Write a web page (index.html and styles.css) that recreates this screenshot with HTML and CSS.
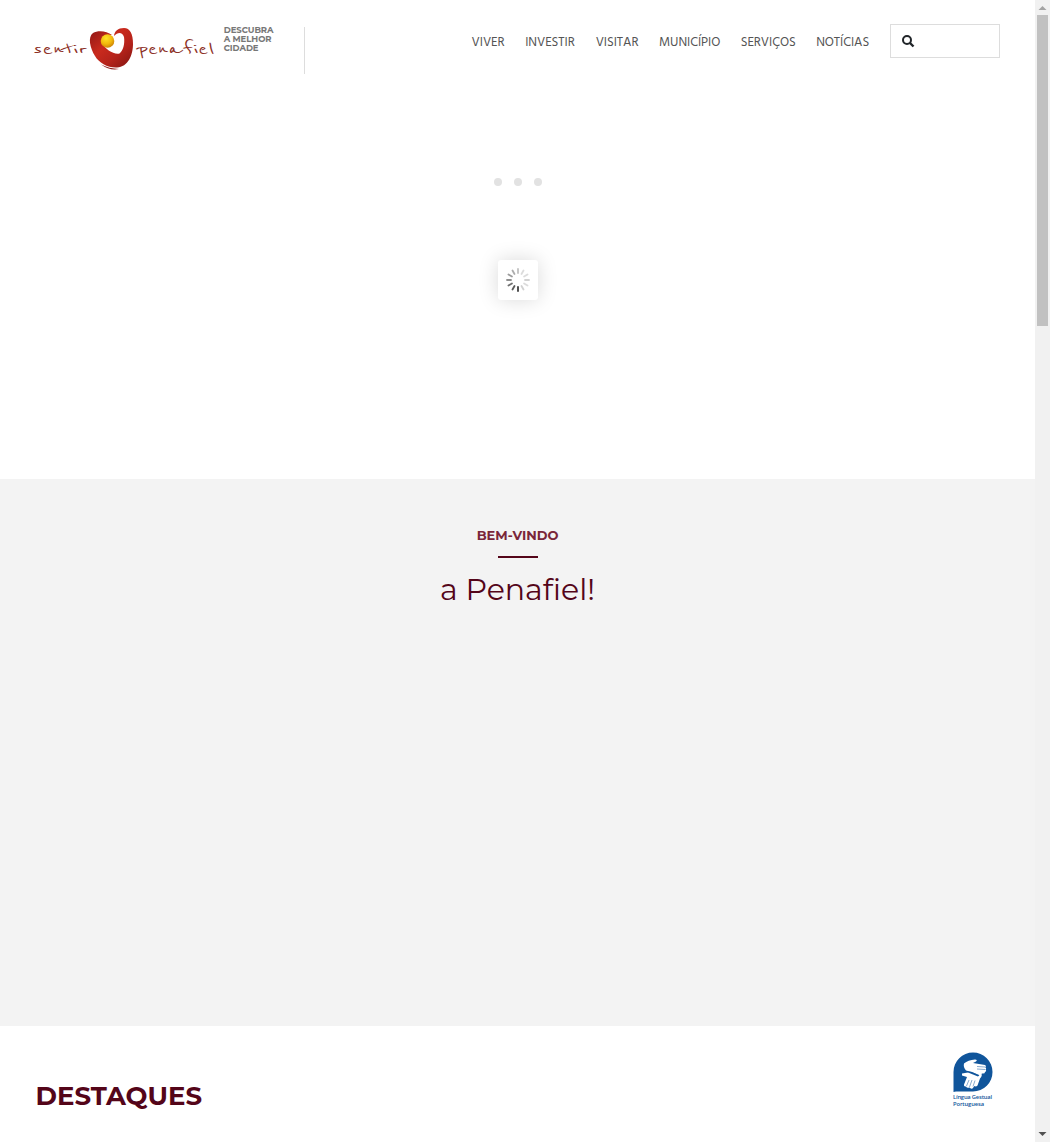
FILE: index.html
```html
<!DOCTYPE html>
<html lang="pt">
<head>
<meta charset="utf-8">
<title>Sentir Penafiel</title>
<link rel="stylesheet" href="styles.css">
</head>
<body>
<div class="window">
  <div class="page">
    <header class="header">
      <a class="logo">
        <svg width="184" height="46" viewBox="32 26 184 46" role="img">
          <defs>
            <linearGradient id="red" x1="0" y1="0" x2="1" y2="1"><stop offset="0" stop-color="#8c1716"/><stop offset=".4" stop-color="#c92a1d"/><stop offset=".65" stop-color="#b5231b"/><stop offset="1" stop-color="#801411"/></linearGradient>
            <radialGradient id="gold" cx=".4" cy=".3" r=".7"><stop offset="0" stop-color="#ffe326"/><stop offset=".6" stop-color="#f2b90c"/><stop offset="1" stop-color="#cf8607"/></radialGradient>
          </defs>
          <text class="script" x="33" y="54" textLength="55" lengthAdjust="spacingAndGlyphs">sentir</text>
          <text class="script" x="137" y="54" textLength="77.500" lengthAdjust="spacingAndGlyphs">penafiel</text>
          <path fill="url(#red)" d="M112 35C107 31 98 30 93 33C87.500 37 90 48 95 56C99 63 108 68 117 67.500C128 67 133 55 133 44C133 34 130 28 124 28C118 28 114.500 31 114 36C118 31.500 122.500 32 124 37C125 44 123 51 119.500 53.500C114 55 105 49 102 43C101 39 105 35 112 35Z"/>
          <circle cx="107.500" cy="41" r="6.800" fill="url(#gold)"/>
          <path fill="#8c1716" d="M101 64.500Q109 68.500 119 69Q110 71 101 64.500Z"/>
        </svg>
      </a>
      <div class="tagline">DESCUBRA<br>A MELHOR<br>CIDADE</div>
      <div class="divider"></div>
      <nav class="nav">
        <a>VIVER</a><a>INVESTIR</a><a>VISITAR</a><a>MUNICÍPIO</a><a>SERVIÇOS</a><a>NOTÍCIAS</a>
      </nav>
      <div class="search">
        <svg width="13" height="13" viewBox="0 0 13 13" fill="none" stroke="#212529"><circle cx="5" cy="5" r="4" stroke-width="2"/><path d="M8 8L11.500 11.500" stroke-width="2.400"/></svg>
      </div>
    </header>
    <section class="slider">
      <div class="dots"><i></i><i></i><i></i></div>
      <div class="loader">
        <svg width="24" height="24" viewBox="-12 -12 24 24" stroke="#333" stroke-width="1.800" stroke-linecap="round">
          <path d="M0 7V11" opacity=".95"/>
          <path d="M0 7V11" opacity=".8" transform="rotate(30)"/>
          <path d="M0 7V11" opacity=".7" transform="rotate(60)"/>
          <path d="M0 7V11" opacity=".55" transform="rotate(90)"/>
          <path d="M0 7V11" opacity=".48" transform="rotate(120)"/>
          <path d="M0 7V11" opacity=".4" transform="rotate(150)"/>
          <path d="M0 7V11" opacity=".3" transform="rotate(180)"/>
          <path d="M0 7V11" opacity=".17" transform="rotate(210)"/>
          <path d="M0 7V11" opacity=".17" transform="rotate(240)"/>
          <path d="M0 7V11" opacity=".22" transform="rotate(270)"/>
          <path d="M0 7V11" opacity=".17" transform="rotate(300)"/>
          <path d="M0 7V11" opacity=".22" transform="rotate(330)"/>
        </svg>
      </div>
    </section>
    <section class="welcome">
      <div class="eyebrow">BEM-VINDO</div>
      <div class="rule"></div>
      <h1 class="title">a Penafiel!</h1>
    </section>
    <section class="highlights">
      <h2 class="heading">DESTAQUES</h2>
      <a class="sign">
        <svg width="42" height="58" viewBox="952 1051 42 58" role="img">
          <path fill="#10559b" d="M953.500 1092V1072A19.500 19.500 0 1 1 973 1091.500H956Z"/>
          <path fill="#fff" d="M964 1063.500Q968 1060 975 1059.500Q978 1060 976 1061.500L973 1063L985 1065Q987 1066.500 985 1067Q987 1068.500 985.500 1069.500Q987 1071 985 1072Q985 1074 982 1073.500L980 1075.500L972 1072L966 1070.500Q963 1067 964 1063.500Z"/>
          <path fill="#fff" d="M962 1073.500L968 1072.500L978 1076.500L981 1073.500Q983 1075 980 1078.500L977.500 1085.500Q976 1087 974.500 1086L972.500 1088.500Q970.500 1089 969.500 1087.500Q967 1088.500 966 1086.500Q963.500 1087 964 1084.500L967 1077L962 1075.500Z"/>
          <path fill="none" stroke="#10559b" stroke-width=".5" d="M977 1066.500L985 1067M977 1069L985 1069.500M966 1071.500L972 1072.500L979 1075.500M969 1080L966.500 1086M972 1080L969.500 1087M975 1080.500L973 1086.500"/>
          <text class="sign-text" x="953" y="1099" textLength="39">Língua Gestual</text>
          <text class="sign-text" x="953" y="1106" textLength="31">Portuguesa</text>
        </svg>
      </a>
    </section>
  </div>
  <div class="scrollbar">
    <svg width="15" height="15"><path d="M3.500 10L7.500 6L11.500 10Z" fill="#a3a3a3"/></svg>
    <div class="thumb"></div>
    <svg class="down" width="15" height="15"><path d="M3.500 5L7.500 9L11.500 5Z" fill="#505050"/></svg>
  </div>
</div>
</body>
</html>
```
FILE: styles.css
```css
* { box-sizing: border-box; }
body { margin: 0; background: #fff; font-family: "Montserrat", "Inter", sans-serif; }
.window { display: flex; height: 1142px; overflow: hidden; }
.page { width: 1035px; display: flex; flex-direction: column; }
.header { height: 100px; display: flex; align-items: flex-start; padding: 24px 35px 0 32px; }
.logo { width: 191.700px; padding-top: 2px; }
.logo svg, .sign svg, .scrollbar svg { display: block; }
.script { font: 400 19px "Reenie Beanie", "Nothing You Could Do", "Caveat", "Indie Flower", "Dancing Script", "Lato", sans-serif; fill: #8c3026; }
.tagline { width: 80.300px; margin-top: 2px; font-size: 8.500px; font-weight: 700; line-height: 9px; color: #777; letter-spacing: -.05px; }
.divider { width: 1px; height: 47px; margin-top: 3px; background: #ddd; }
.nav { margin-left: 166.600px; display: grid; grid-template-columns: 53.600px 70.500px 63.400px 81.600px 75.500px 73.800px; padding-top: 10px; font: 13px/18px "Hind", "Noto Sans", sans-serif; letter-spacing: -.08px; color: #555; white-space: nowrap; }
.search { width: 110px; height: 34px; border: 1px solid #ddd; padding: 10px 11px; }
.search svg { display: block; }
.slider { height: 379px; display: flex; flex-direction: column; align-items: center; padding-top: 78px; }
.dots { display: flex; gap: 12px; }
.dots i { width: 8px; height: 8px; border-radius: 50%; background: #e2e2e2; }
.loader { width: 40px; height: 40px; margin-top: 74px; display: grid; place-items: center; border-radius: 3px; background: #fff; box-shadow: 0 0 20px rgba(0,0,0,.15); }
.welcome { height: 547px; background: #f3f3f3; display: flex; flex-direction: column; align-items: center; padding-top: 47px; }
.eyebrow { font-size: 13px; line-height: 18px; font-weight: 700; color: #7a2639; }
.rule { width: 40px; height: 2px; margin-top: 12px; background: #540519; }
.title { margin: 12px 0 0; font-size: 30px; line-height: 40px; font-weight: 400; color: #540519; }
.highlights { flex: 1; display: flex; justify-content: space-between; padding: 25px 41px 0 35.500px; }
.heading { margin: 27px 0 0; font-size: 26px; line-height: 36px; font-weight: 700; color: #540519; }
.sign-text { font: 600 5.800px "Open Sans", sans-serif; fill: #10559b; }
.scrollbar { width: 15px; background: #f1f1f1; display: flex; flex-direction: column; }
.thumb { width: 11px; height: 311px; margin-left: 2px; background: #c1c1c1; }
.down { margin-top: auto; }
```
